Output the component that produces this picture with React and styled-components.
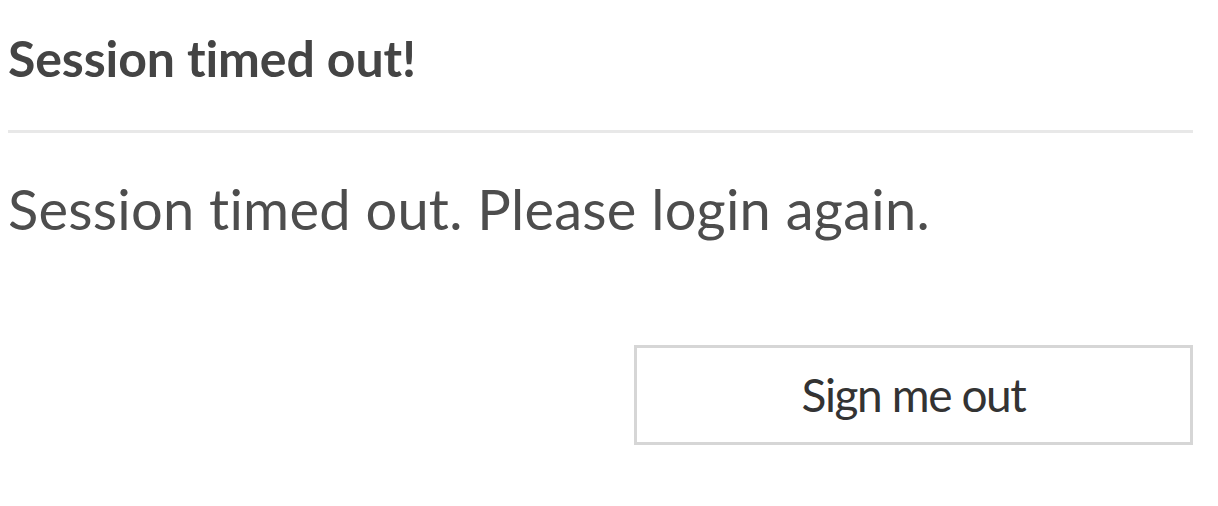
import React from "react";
import styled, { createGlobalStyle } from "styled-components";

const Global = createGlobalStyle`
  html, body { margin: 0; padding: 0; background: #fff; }
  body {
    font-family: Lato, "Open Sans", sans-serif;
    color: #4a4a4a;
    font-variant-ligatures: none;
    font-feature-settings: "liga" 0;
  }
`;

const Dialog = styled.div`
  width: 1185px;
  margin-left: 8px;
  display: flex;
  flex-direction: column;
`;

const Header = styled.div`
  padding-top: 28px;
  padding-bottom: 42px;
  border-bottom: 3px solid #e8e8e8;
`;

const Title = styled.h1`
  margin: 0;
  font-size: 50px;
  font-weight: 700;
  line-height: 60px;
  letter-spacing: -0.1px;
  color: #444;
`;

const Body = styled.p`
  margin: 0;
  padding-top: 42px;
  font-size: 56px;
  line-height: 67px;
  font-weight: 400;
  letter-spacing: 0.25px;
  color: #4d4d4d;
`;

const Footer = styled.div`
  display: flex;
  justify-content: flex-end;
  padding-top: 103px;
`;

const Button = styled.button`
  width: 559px;
  height: 100px;
  box-sizing: border-box;
  background: #fff;
  border: 3px solid #d6d6d6;
  font-family: Lato, "Open Sans", sans-serif;
  font-variant-ligatures: none;
  font-size: 46px;
  letter-spacing: -1.4px;
  line-height: 56px;
  color: #333;
  display: flex;
  align-items: center;
  justify-content: center;
  padding: 0;
`;

export default function App() {
  return (
    <>
      <Global />
      <Dialog>
        <Header>
          <Title>Session timed out!</Title>
        </Header>
        <Body>Session timed out. Please login again.</Body>
        <Footer>
          <Button>Sign me out</Button>
        </Footer>
      </Dialog>
    </>
  );
}
